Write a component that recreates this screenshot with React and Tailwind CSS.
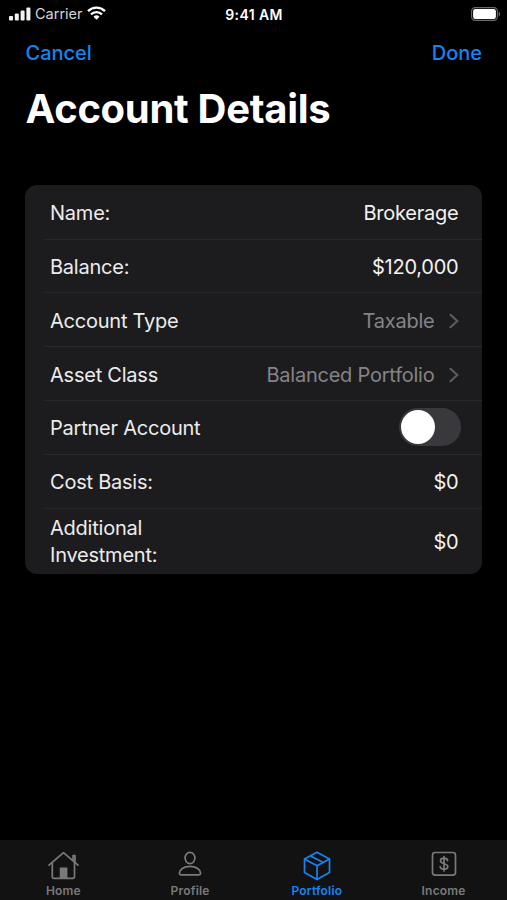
import React from 'react';

const ROWS = [
    { label: 'Name:', value: 'Brokerage', type: 'text' },
    { label: 'Balance:', value: '$120,000', type: 'text' },
    { label: 'Account Type', value: 'Taxable', type: 'link' },
    { label: 'Asset Class', value: 'Balanced Portfolio', type: 'link' },
    { label: 'Partner Account', type: 'switch' },
    { label: 'Cost Basis:', value: '$0', type: 'text' },
    { label: 'Additional Investment:', value: '$0', type: 'text', tall: true },
];

const SignalIcon = () => (
    <svg width="22" height="14" viewBox="0 0 22 14" fill="#f4f4f4">
        <rect x="0" y="9" width="4" height="4.6" rx="1" />
        <rect x="5.8" y="6.6" width="4" height="7" rx="1" />
        <rect x="11.6" y="3.6" width="4" height="10" rx="1" />
        <rect x="17.4" y="0.6" width="4" height="13" rx="1" />
    </svg>
);

const WifiIcon = () => (
    <svg width="19" height="14" viewBox="0 0 19 14" fill="none" stroke="#fff" strokeWidth="2.4">
        <path d="M1 5.1a12.2 12.2 0 0 1 17 0" />
        <path d="M4 8.4a7.9 7.9 0 0 1 11 0" />
        <path d="M9.5 13.8L6.5 10.8a4.3 4.3 0 0 1 6 0z" fill="#fff" stroke="none" />
    </svg>
);

const BatteryIcon = () => (
    <svg width="30" height="14" viewBox="0 0 30 14" fill="none">
        <rect x="0.6" y="0.6" width="25.8" height="12.8" rx="3.6" stroke="#6b6b6b" strokeWidth="1.1" />
        <rect x="2.1" y="2.1" width="22.8" height="9.8" rx="2.2" fill="#fff" />
        <path d="M27.7 4.7c1.9.6 1.9 4 0 4.6z" fill="#6b6b6b" />
    </svg>
);

const ChevronIcon = () => (
    <svg width="10" height="16" viewBox="0 0 10 16" fill="none" stroke="#5c5c60" strokeWidth="2.2" strokeLinecap="round" strokeLinejoin="round">
        <path d="M1.5 1.8L8.3 8l-6.8 6.2" />
    </svg>
);

const HomeIcon = () => (
    <svg width="32" height="30" viewBox="0 0 32 30" fill="none" stroke="currentColor" strokeWidth="1.7" strokeLinecap="round" strokeLinejoin="round">
        <path d="M2 14.2L16.5 1.6 31 14.2" />
        <path d="M5.3 11.7v13.8c0 1.1.8 1.8 1.9 1.8h18.4c1.1 0 1.9-.7 1.9-1.8V11.7" />
        <path d="M26.1 9.2V4.7h1.9v6.4" />
        <path d="M13.6 27V17.4h6V27z" fill="currentColor" />
    </svg>
);

const ProfileIcon = () => (
    <svg width="26" height="30" viewBox="0 0 26 30" fill="none" stroke="currentColor" strokeWidth="1.7" strokeLinejoin="round">
        <ellipse cx="13" cy="7" rx="4.9" ry="5.6" />
        <path d="M2.4 22.3C2.4 18.8 6.6 15.3 13 15.3s10.6 3.5 10.6 7c0 1.1-.6 1.5-1.7 1.5H4.1c-1.1 0-1.7-.4-1.7-1.5z" />
    </svg>
);

const PortfolioIcon = () => (
    <svg width="28" height="30" viewBox="0 0 28 30" fill="none" stroke="currentColor" strokeWidth="1.7" strokeLinejoin="round">
        <path d="M14 1.2L26.5 8v13.5L14 28.6 1.5 21.5V8z" />
        <path d="M1.5 8L14 14.8 26.5 8M14 14.8v13.8" />
        <path d="M7.5 4.9L20.3 11.6" />
    </svg>
);

const IncomeIcon = () => (
    <svg width="26" height="30" viewBox="0 0 26 30" fill="none" stroke="currentColor" strokeWidth="1.7" strokeLinecap="round">
        <rect x="1.5" y="1.5" width="23" height="22.7" rx="2.6" />
        <path d="M16.6 9.7c-.2-1.6-1.6-2.5-3.6-2.5s-3.5.9-3.5 2.6c0 3.7 7.3 2.1 7.3 5.8 0 1.7-1.6 2.7-3.8 2.7-2.3 0-3.7-1.1-3.9-2.8M13 5.6v14.4" />
    </svg>
);

const TABS = [
    { name: 'Home', Icon: HomeIcon },
    { name: 'Profile', Icon: ProfileIcon },
    { name: 'Portfolio', Icon: PortfolioIcon, active: true },
    { name: 'Income', Icon: IncomeIcon },
];

const StatusBar = () => (
    <div className="grid h-7 grid-cols-3 items-center pl-[9px] pr-[6px] text-white">
        <div className="flex items-center">
            <SignalIcon />
            <span className="ml-1 w-[47px] text-[14.5px] text-[#d4d4d4]">Carrier</span>
            <span className="ml-[5px] -mt-0.5"><WifiIcon /></span>
        </div>
        <span className="-ml-[2px] pt-[1px] text-center text-[14px] font-semibold tracking-[0.4px]">9:41 AM</span>
        <div className="flex justify-end pb-[1px]">
            <BatteryIcon />
        </div>
    </div>
);

const DetailRow = ({ row, last }) => (
    <div className={`ml-5 flex items-center justify-between pl-[5px] tracking-[-0.23px] ${row.tall ? 'h-[65.4px] pt-[2px]' : 'h-[53.8px] pt-[3px]'} ${last ? '' : 'border-b border-[#29292b]'} ${row.type === 'switch' ? 'pr-[21.5px]' : 'pr-[23.5px]'}`}>
        <span className={`text-[20px] leading-[27px] text-[#ececec] ${row.tall ? 'w-[130px]' : ''}`}>{row.label}</span>
        {row.type === 'text' && (
            <span className="text-[20px] leading-[27px] text-[#f2f2f2]">{row.value}</span>
        )}
        {row.type === 'link' && (
            <span className="flex items-center gap-[14px] text-[20px] leading-[27px] text-[#848487]">
                {row.value}
                <ChevronIcon />
            </span>
        )}
        {row.type === 'switch' && (
            <button type="button" role="switch" aria-checked="false" className="-mt-[3px] flex h-[38px] w-[62px] items-center rounded-full bg-[#39393d] p-[2px]">
                <span className="h-[34px] w-[34px] rounded-full bg-white" />
            </button>
        )}
    </div>
);

const App = () => (
    <div className="flex h-[900px] w-[507px] flex-col overflow-hidden bg-black font-['Inter',sans-serif]">
        <StatusBar />

        <header className="px-[25px]">
            <div className="flex h-[50px] items-center justify-between text-[20px] font-medium text-[#1784f2]">
                <button type="button" className="pl-[0.5px]">Cancel</button>
                <button type="button">Done</button>
            </div>
            <h1 className="mt-[6px] pl-[0.5px] text-[40px] font-bold leading-[50px] tracking-[-0.3px] text-white">Account Details</h1>
        </header>

        <main className="flex-1 px-[25px] pt-[51px]">
            <div className="overflow-hidden rounded-[12px] bg-[#1c1c1e] pt-[0.8px]">
                {ROWS.map((row, i) => (
                    <DetailRow key={row.label} row={row} last={i === ROWS.length - 1} />
                ))}
            </div>
        </main>

        <nav className="grid h-[60px] grid-cols-4 bg-[#121212]">
            {TABS.map(({ name, Icon, active }) => (
                <div key={name} className={`flex flex-col items-center pt-[11px] ${active ? 'text-[#1784f2]' : 'text-[#7a7a7a]'}`}>
                    <Icon />
                    <span className="mt-[2px] text-[12px] font-semibold leading-4 tracking-[0.2px]">{name}</span>
                </div>
            ))}
        </nav>
    </div>
);

export default App;
